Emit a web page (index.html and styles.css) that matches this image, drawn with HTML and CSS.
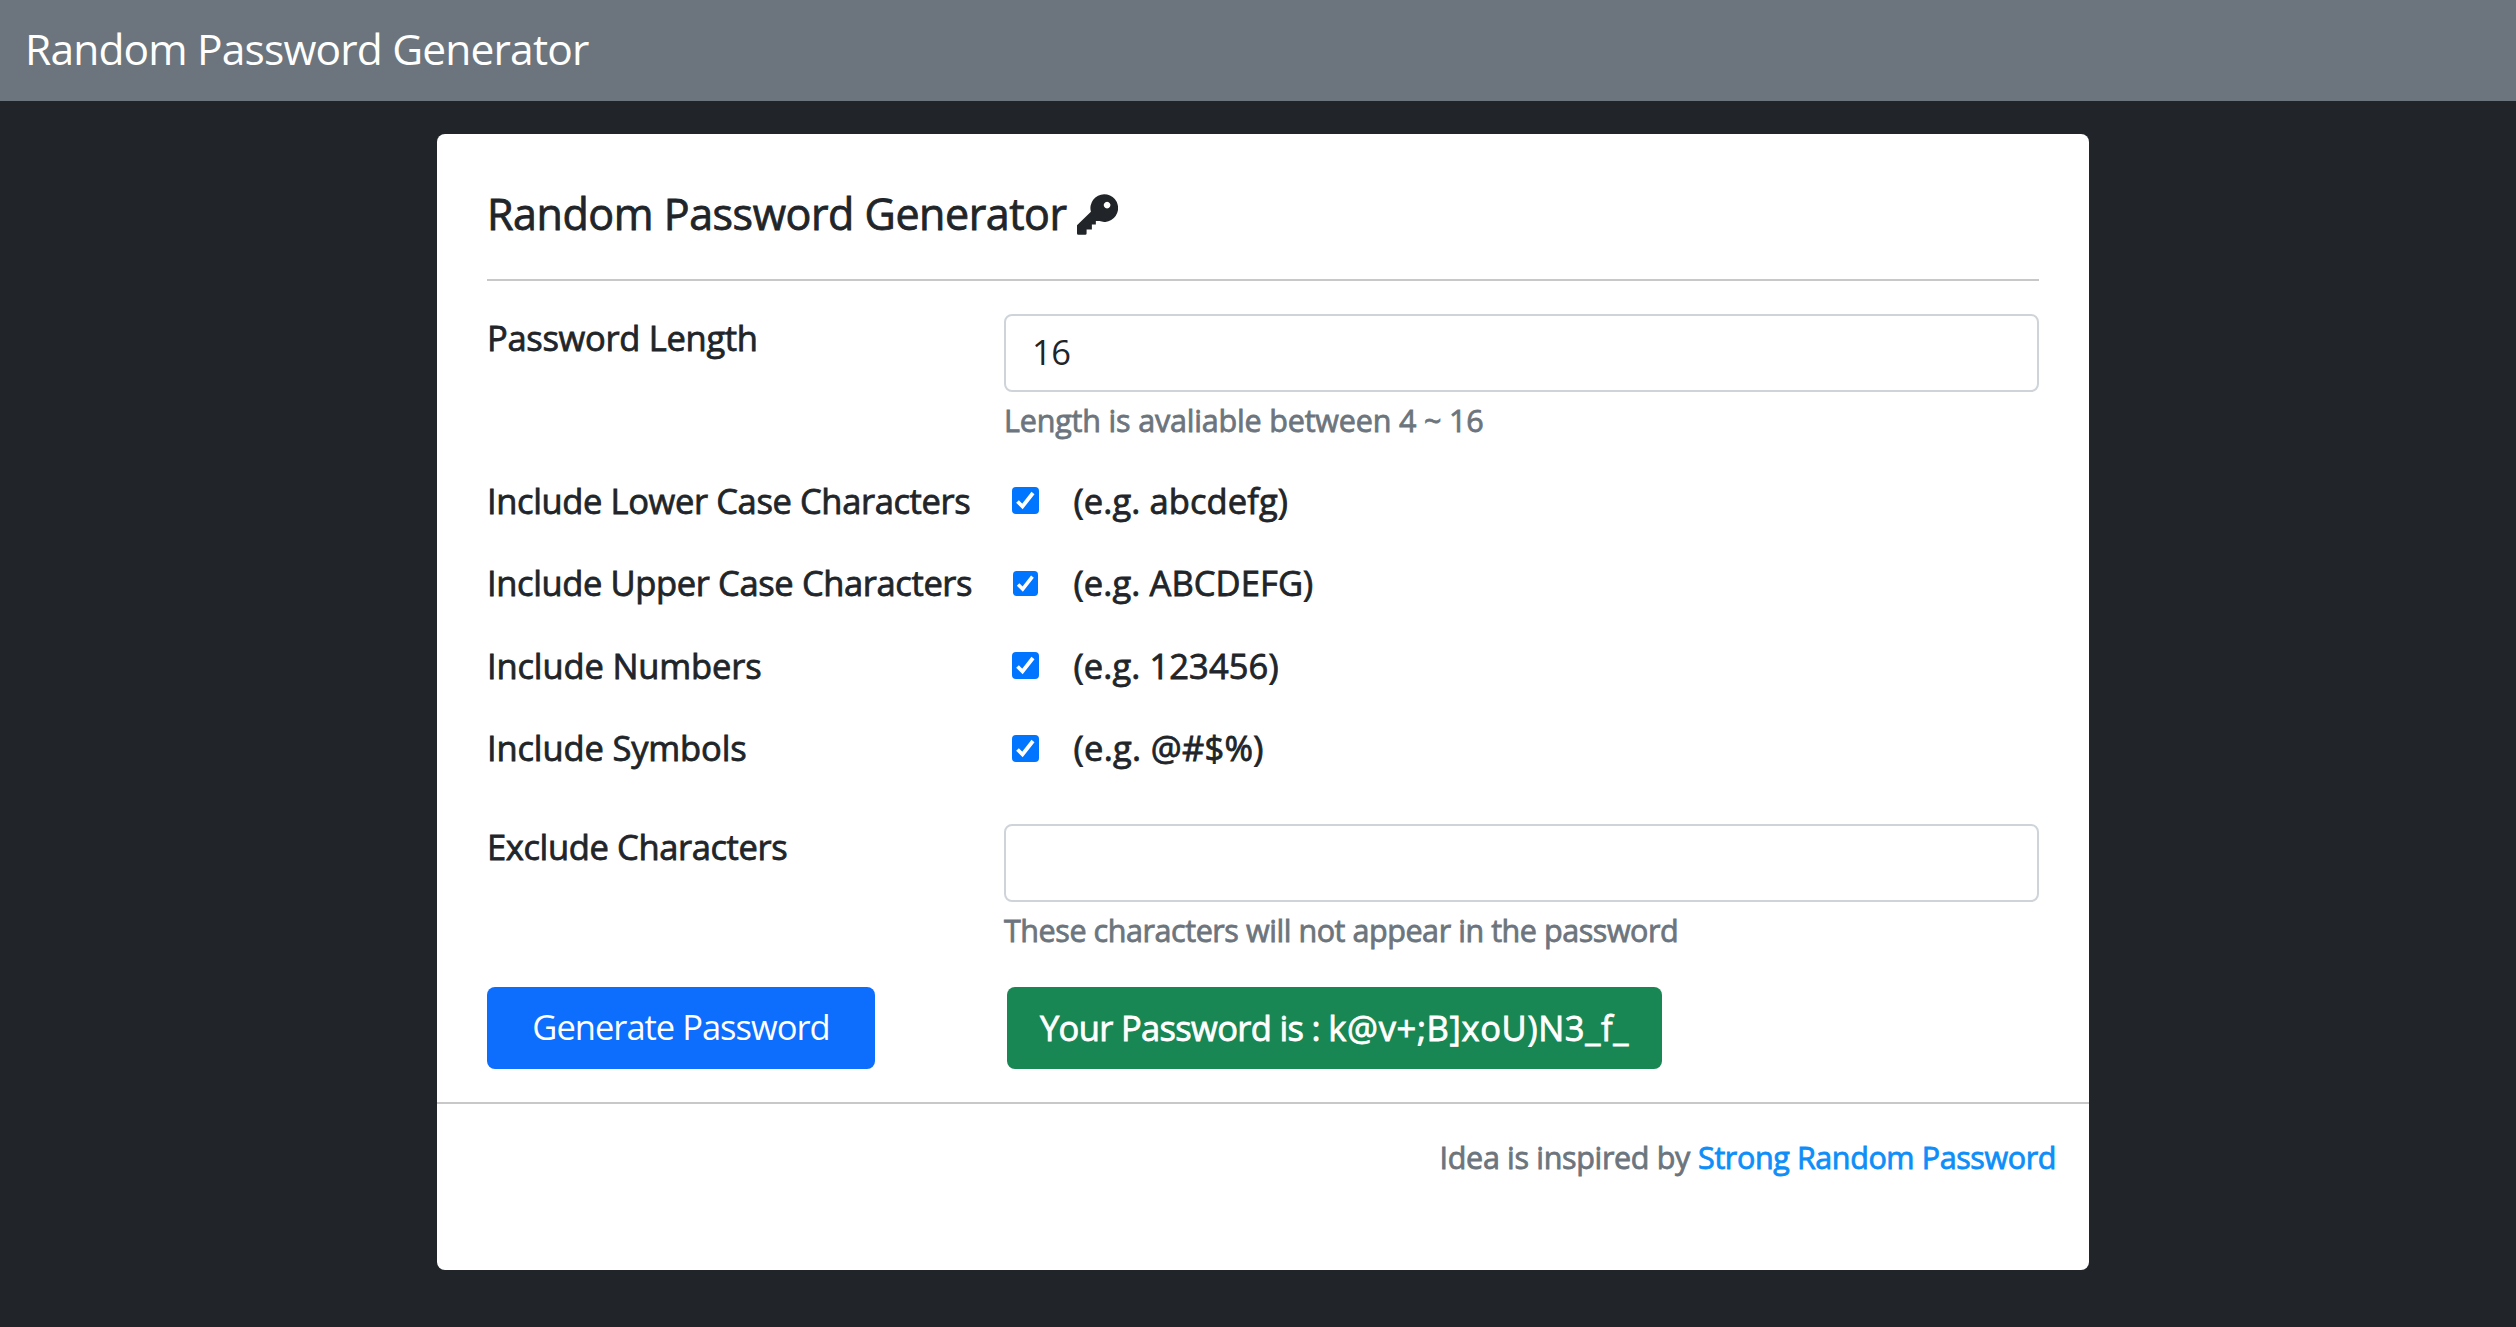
FILE: index.html
```html
<!DOCTYPE html>
<html lang="en">
<head>
<meta charset="utf-8">
<title>Random Password Generator</title>
<link rel="stylesheet" href="styles.css">
</head>
<body>
<nav class="navbar"><span class="brand">Random Password Generator</span></nav>
<main class="card">
  <div class="body">
    <h1 class="title"><span>Random Password Generator</span>
      <svg class="key" viewBox="0 0 124 123"><path fill="currentColor" fill-rule="evenodd" d="M82 0a42 42 0 1 1-14 81.500L57 81V92H45V107H29V119Q29 123 25 123H4Q0 123 0 119V94L42 53A42 42 0 0 1 82 0zM91 23a10 10 0 1 0 .01 0z"/></svg>
    </h1>
    <hr class="rule">
    <div class="row field">
      <label class="label length" for="length">Password Length</label>
      <div class="control">
        <input class="input" id="length" type="text" value="16">
        <p class="help">Length is avaliable between 4 ~ 16</p>
      </div>
    </div>
    <div class="options">
      <div class="row option"><span class="label">Include Lower Case Characters</span><div class="choice"><svg class="check" viewBox="0 0 27 27"><rect width="27" height="27" rx="4"/><path d="M5.500 14.500l5 5L21 6"/></svg><span>(e.g. abcdefg)</span></div></div>
      <div class="row option"><span class="label">Include Upper Case Characters</span><div class="choice"><svg class="check small" viewBox="0 0 27 27"><rect width="27" height="27" rx="4"/><path d="M5.500 14.500l5 5L21 6"/></svg><span>(e.g. ABCDEFG)</span></div></div>
      <div class="row option"><span class="label short">Include Numbers</span><div class="choice"><svg class="check" viewBox="0 0 27 27"><rect width="27" height="27" rx="4"/><path d="M5.500 14.500l5 5L21 6"/></svg><span>(e.g. 123456)</span></div></div>
      <div class="row option"><span class="label short">Include Symbols</span><div class="choice"><svg class="check" viewBox="0 0 27 27"><rect width="27" height="27" rx="4"/><path d="M5.500 14.500l5 5L21 6"/></svg><span class="symbols">(e.g. @#$%)</span></div></div>
    </div>
    <div class="row field">
      <label class="label" for="exclude">Exclude Characters</label>
      <div class="control">
        <input class="input" id="exclude" type="text">
        <p class="help exclude">These characters will not appear in the password</p>
      </div>
    </div>
    <div class="row actions">
      <button class="generate" type="button">Generate Password</button>
      <div class="result">Your Password is : <span class="password">k@v+;B]xoU)N3_f_</span></div>
    </div>
  </div>
  <footer class="footer"><span class="idea">Idea is inspired by</span><a class="link">Strong Random Password</a></footer>
</main>
</body>
</html>
```
FILE: styles.css
```css
* { box-sizing: border-box; }
body {
  margin: 0;
  min-height: 1327px;
  background: #212529;
  color: #212529;
  font: 34.5px/52px "Open Sans", "Noto Sans", sans-serif;
}
.navbar {
  display: flex;
  height: 101px;
  padding: 16.5px 25px;
  background: #6c757d;
}
.brand {
  color: #fff;
  font-size: 42.5px;
  line-height: 63px;
  letter-spacing: -0.83px;
}
.card {
  width: 1652px;
  height: 1136px;
  margin: 33px 0 0 437px;
  border-radius: 8px;
  background: #fff;
  -webkit-text-stroke: 0.8px currentColor;
}
.body { padding: 50px 50px 33px; }
.title {
  display: flex;
  align-items: center;
  gap: 10px;
  margin: 0 0 35px;
  font-size: 43px;
  font-weight: 400;
  line-height: 60px;
  letter-spacing: -0.46px;
}
.key {
  width: 41px;
  height: 41px;
  margin-top: 1px;
  stroke: none;
}
.rule {
  height: 2px;
  margin: 0;
  border: 0;
  background: #c8c8c9;
}
.row {
  display: grid;
  grid-template-columns: 517px 1fr;
}
.field { height: 132px; margin-top: 30px; }
.label { letter-spacing: -0.38px; }
.label.length { padding-top: 1px; letter-spacing: -0.3px; }
.label.short { letter-spacing: -0.15px; }
.control { padding-top: 3px; }
.input {
  display: block;
  width: 100%;
  height: 78px;
  padding: 0 26px 3px;
  border: 2px solid #ced4da;
  border-radius: 8px;
  background: #fff;
  color: #212529;
  font: inherit;
  letter-spacing: -0.6px;
  -webkit-text-stroke: 0;
}
.help {
  margin: 5px 0 0;
  color: #6c757d;
  font-size: 30.5px;
  line-height: 46px;
  letter-spacing: -0.18px;
}
.help.exclude { letter-spacing: -0.44px; }
.options { padding: 16.3px 0 1.3px; }
.option { height: 82.6px; align-items: center; }
.choice {
  display: flex;
  align-items: center;
  padding-left: 8px;
}
.check {
  width: 27px;
  height: 27px;
  margin-right: 34.5px;
}
.check.small {
  width: 25px;
  height: 25px;
  margin: 0 35.5px 0 1px;
}
.check rect { fill: #0075ff; stroke: none; }
.check path { fill: none; stroke: #fff; stroke-width: 3.8; }
.choice span { letter-spacing: 0.1px; }
.choice .symbols { letter-spacing: 0.3px; }
.actions { margin-top: 34px; }
.generate {
  width: 388px;
  height: 82px;
  padding: 0 0 1px;
  border: 0;
  border-radius: 8px;
  background: #0d6efd;
  color: #fff;
  font: inherit;
  letter-spacing: -1px;
  -webkit-text-stroke: 0;
}
.result {
  justify-self: start;
  width: 655px;
  height: 82px;
  margin-left: 3px;
  border-radius: 8px;
  background: #198754;
  color: #fff;
  line-height: 81px;
  text-align: center;
  letter-spacing: -0.66px;
}
.password { letter-spacing: 0.65px; }
.footer {
  display: flex;
  justify-content: flex-end;
  gap: 8px;
  padding: 30px 33px 0;
  border-top: 2px solid #c8c8c9;
  font-size: 30.5px;
  line-height: 46px;
  letter-spacing: -0.4px;
}
.idea { color: #6c757d; letter-spacing: -0.33px; }
.link { color: #0d8ef8; }
```
